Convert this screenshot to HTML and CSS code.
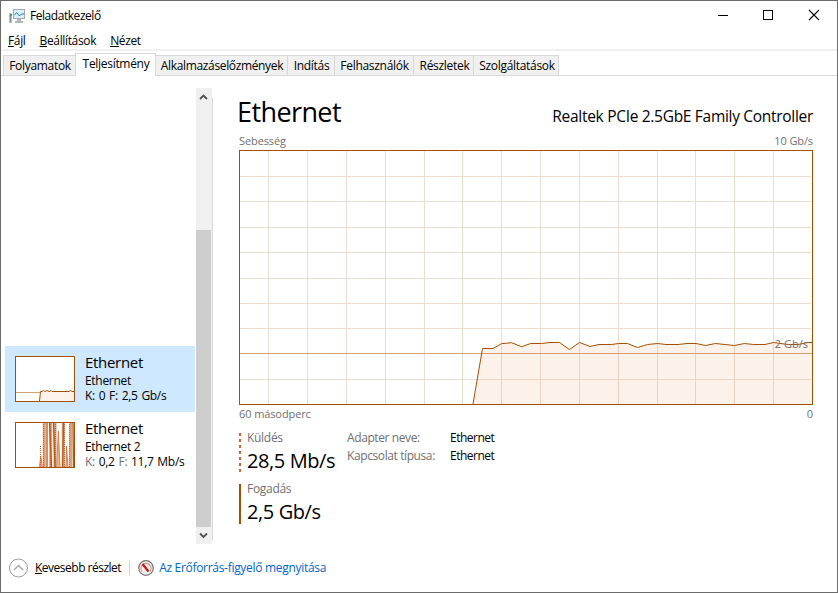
FILE: index.html
```
<!DOCTYPE html>
<html lang="hu">
<head>
    <meta charset="UTF-8">
    <title>Feladatkezelő</title>
    <link rel="stylesheet" href="styles.css">
</head>
<body>
    <div class="window">
        <header class="titlebar">
            <svg class="app-icon" width="17" height="16" viewBox="0 0 17 16">
                <rect x="0.5" y="5.5" width="2" height="9" fill="#8d9193" stroke="#b9bcbe"/>
                <rect x="1" y="6" width="2" height="2" fill="#3fae3a"/>
                <rect x="4.5" y="1.5" width="11" height="9" fill="#d9f0fb" stroke="#a5a9ac"/>
                <path d="M5.500 7L7.500 4.500L10.500 8L12.500 6L15 6" fill="none" stroke="#1b86c8"/>
                <path d="M8 11h4v2h2v2H6v-2h2z" fill="#b4b7b9"/>
            </svg>
            <span class="title">Feladatkezelő</span>
            <div class="controls">
                <svg width="46" height="30" viewBox="0 0 46 30"><path d="M18 14.5h10" stroke="#000"/></svg>
                <svg width="46" height="30" viewBox="0 0 46 30"><rect x="17.5" y="9.5" width="9" height="9" fill="none" stroke="#000"/></svg>
                <svg width="46" height="30" viewBox="0 0 46 30"><path d="M17 9l10 10M27 9l-10 10" stroke="#000" stroke-width="1.1"/></svg>
            </div>
        </header>

        <nav class="menu">
            <span><u>F</u>ájl</span>
            <span><u>B</u>eállítások</span>
            <span><u>N</u>ézet</span>
        </nav>

        <nav class="tabs">
            <div class="tab tab-processes">Folyamatok</div>
            <div class="tab active">Teljesítmény</div>
            <div class="tab tab-history">Alkalmazáselőzmények</div>
            <div class="tab tab-startup">Indítás</div>
            <div class="tab tab-users">Felhasználók</div>
            <div class="tab tab-details">Részletek</div>
            <div class="tab tab-services">Szolgáltatások</div>
        </nav>

        <main class="content">
            <aside class="sidebar">
                <div class="item selected">
                    <svg class="thumb" width="60" height="46" viewBox="0 0 60 46">
                        <rect x="0.5" y="0.5" width="59" height="45" fill="#fff"/>
                        <path d="M24 45L26 35.500H59V45Z" fill="#fcf3eb"/>
                        <path d="M1 36.5H25" stroke="#d3a078"/>
                        <path d="M24.500 45L25.500 35.500H27L28.500 34.500L30 35.500L32 34.500L34 35.500L36 34.500L37 35.500H54L55.500 34.500L57 35.500H59" fill="none" stroke="#a74f01"/>
                        <rect x="0.5" y="0.5" width="59" height="45" fill="none" stroke="#a74f01"/>
                    </svg>
                    <div class="info">
                        <div class="name">Ethernet</div>
                        <div class="sub">Ethernet</div>
                        <div class="rate">K: 0 F: 2,5 Gb/s</div>
                    </div>
                </div>
                <div class="item">
                    <svg class="thumb" width="60" height="46" viewBox="0 0 60 46">
                        <rect x="0.5" y="0.5" width="59" height="45" fill="#fff"/>
                        <path d="M24.500 45L25.700 34L27.500 45M41.500 45L43.400 9L45 45M51 45L51.500 24L53 45" fill="#e5b896" stroke="#c0703c" stroke-width="0.800"/>
                        <path d="M29.300 1V45M35.700 1V45M40 1V45M48.300 1V45M55.700 1V45" stroke="#dfa07c" stroke-width="3"/>
                        <path d="M32 1V45M34.500 1L36.500 45M38.500 1L40 45M48.500 1L47.500 45M58 1L58.500 45" stroke="#b05a14" stroke-width="1.300"/>
                        <path d="M25.500 45V24M28.500 45V1M35.500 45V1M40.500 45V1M49.500 45V1M54.500 45V1" stroke="#d4622a" stroke-dasharray="1 1"/>
                        <rect x="0.5" y="0.5" width="59" height="45" fill="none" stroke="#a74f01"/>
                    </svg>
                    <div class="info">
                        <div class="name">Ethernet</div>
                        <div class="sub">Ethernet 2</div>
                        <div class="rate"><i>K:</i> 0,2 <i>F:</i> 11,7 Mb/s</div>
                    </div>
                </div>
            </aside>

            <div class="scrollbar">
                <svg width="16" height="17" viewBox="0 0 16 17"><path d="M4 11L7.500 7.500L11 11" fill="none" stroke="#505050" stroke-width="1.8"/></svg>
                <div class="handle"></div>
                <svg width="16" height="17" viewBox="0 0 16 17"><path d="M4 6.500L7.500 10L11 6.500" fill="none" stroke="#505050" stroke-width="1.8"/></svg>
            </div>
            <div class="splitter"></div>

            <section class="detail">
                <div class="heading">
                    <h1>Ethernet</h1>
                    <span class="adapter">Realtek PCIe 2.5GbE Family Controller</span>
                </div>
                <div class="axis axis-top"><span>Sebesség</span><span>10 Gb/s</span></div>
                <div class="chart">
                    <svg width="574" height="255" viewBox="239 150 574 255">
                        <path d="M268.5 151V404M307.5 151V404M346.5 151V404M385.5 151V404M424.5 151V404M462.5 151V404M501.5 151V404M540.5 151V404M579.5 151V404M618.5 151V404M657.5 151V404M695.5 151V404M734.5 151V404M773.5 151V404M240 176.5H811M240 201.5H811M240 227.500H811M240 252.5H811M240 278.5H811M240 303.5H811M240 328.5H811M240 379.5H811" stroke="#eddccf"/>
                        <path d="M240 353.500H812" stroke="#d3a078"/>
                        <path class="area" d="M473 404L482.500 348.500H493L501.500 343.700L511.500 342.700L521.500 346.700L530.700 343.500H541.500L550 342.500H559.500L569.500 349.500L579.500 342.500L590 346.500L599 344.500H611.500L618.500 343.500H627.500L637.500 347.500L647.500 344.500L657.500 343.500L666 344.500H678L687 343.500H696L705.500 345.500L715.500 343.500L725 344.500L734.500 345.500L744.500 343.500L753.500 344.500H765L773.500 342.500L788 344.500H798L808 342.500H812V404Z"/>
                        <path class="line" d="M473 404L482.500 348.500H493L501.500 343.700L511.500 342.700L521.500 346.700L530.700 343.500H541.500L550 342.500H559.500L569.500 349.500L579.500 342.500L590 346.500L599 344.500H611.500L618.500 343.500H627.500L637.500 347.500L647.500 344.500L657.500 343.500L666 344.500H678L687 343.500H696L705.500 345.500L715.500 343.500L725 344.500L734.500 345.500L744.500 343.500L753.500 344.500H765L773.500 342.500L788 344.500H798L808 342.500H812"/>
                        <rect x="239.5" y="150.5" width="573" height="254" fill="none" stroke="#a74f01"/>
                    </svg>
                    <span class="limit">2 Gb/s</span>
                </div>
                <div class="axis axis-bottom"><span>60 másodperc</span><span>0</span></div>

                <div class="stats">
                    <div class="rates">
                        <div class="stat">
                            <svg width="2" height="40" viewBox="0 0 2 40"><path d="M1 0V40" stroke="#d4622a" stroke-width="2" stroke-dasharray="3 3"/></svg>
                            <div>
                                <div class="label">Küldés</div>
                                <div class="value">28,5 Mb/s</div>
                            </div>
                        </div>
                        <div class="stat">
                            <svg width="2" height="40" viewBox="0 0 2 40"><path d="M1 0V40" stroke="#a74f01" stroke-width="2"/></svg>
                            <div>
                                <div class="label">Fogadás</div>
                                <div class="value">2,5 Gb/s</div>
                            </div>
                        </div>
                    </div>
                    <dl class="props">
                        <dt>Adapter neve:</dt><dd>Ethernet</dd>
                        <dt>Kapcsolat típusa:</dt><dd>Ethernet</dd>
                    </dl>
                </div>
            </section>
        </main>

        <footer class="footer">
            <svg width="21" height="20" viewBox="0 0 21 20"><circle cx="10.500" cy="10" r="9" fill="none" stroke="#9a9a9a"/><path d="M6 12L10.500 7.500L15 12" fill="none" stroke="#a8a8a8" stroke-width="1.500"/></svg>
            <span class="less"><u>K</u>evesebb részlet</span>
            <span class="divider"></span>
            <svg width="16" height="16" viewBox="0 0 16 16">
                <circle cx="8" cy="8" r="7.300" fill="#f1efed" stroke="#77726f" stroke-width="1.200"/>
                <path d="M4 11.500A5 5 0 1 1 12 11.500" fill="none" stroke="#c9a58c" stroke-width="1.300"/>
                <path d="M4.500 4L10.500 11.500" stroke="#d01414" stroke-width="2.200"/>
            </svg>
            <span class="link">Az Erőforrás-figyelő megnyitása</span>
        </footer>
    </div>
</body>
</html>
```
FILE: styles.css
```
* {
    box-sizing: border-box;
}

body {
    margin: 0;
    font-family: "Open Sans", "Noto Sans", sans-serif;
    font-size: 12px;
    line-height: 16px;
    letter-spacing: -0.3px;
    color: #000;
    background-color: #fff;
    white-space: nowrap;
}

svg {
    display: block;
    flex: none;
}

.window {
    display: flex;
    flex-direction: column;
    width: 838px;
    height: 593px;
    border: 1px solid #6b6b6b;
    overflow: hidden;
}

.titlebar {
    display: flex;
    align-items: center;
    height: 30px;
    padding-left: 8px;
}

.title {
    margin-left: 4px;
    letter-spacing: -0.45px;
}

.controls {
    display: flex;
    margin: 0 -1px 0 auto;
}

.menu {
    display: flex;
    gap: 14px;
    height: 20px;
    padding: 2px 7px 0;
    letter-spacing: -0.35px;
    border-bottom: 2px solid #f0f0f0;
}

.tabs {
    display: flex;
    align-items: flex-end;
    height: 25px;
    padding-left: 2px;
    background: linear-gradient(#d9d9d9, #d9d9d9) bottom / 100% 1px no-repeat;
}

.tab {
    height: 21px;
    padding: 2px 0 0 1px;
    text-align: center;
    background-color: #f0f0f0;
    border: 1px solid #d9d9d9;
    border-left: none;
}

.tab.active {
    width: 81px;
    height: 23px;
    background-color: #fff;
    border-left: 1px solid #d9d9d9;
    border-bottom: none;
}

.tab-processes {
    width: 72px;
    border-left: 1px solid #d9d9d9;
    border-right: none;
}

.tab-history {
    width: 132px;
    letter-spacing: -0.35px;
}

.tab-startup {
    width: 47px;
}

.tab-users {
    width: 79px;
}

.tab-details {
    width: 60px;
    padding-left: 2px;
}

.tab-services {
    width: 85px;
    padding-left: 2px;
}

.content {
    display: flex;
    height: 468px;
    padding: 12px 24px 0 4px;
}

.sidebar {
    width: 191px;
    padding-top: 258px;
}

.item {
    display: flex;
    width: 190px;
    height: 66px;
    padding: 10px 0 0 10px;
}

.item.selected {
    background-color: #cde8ff;
}

.info {
    margin: -4px 0 0 10px;
}

.name {
    font-size: 15px;
    line-height: 21px;
    letter-spacing: -0.3px;
}

.sub {
    line-height: 15px;
}

.rate {
    line-height: 15px;
    word-spacing: 1px;
}

.rate i {
    font-style: normal;
    color: #707070;
}

.scrollbar {
    width: 16px;
    height: 456px;
    background-color: #f0f0f0;
}

.handle {
    width: 15px;
    height: 297px;
    margin-top: 125px;
    background-color: #cdcdcd;
}

.splitter {
    width: 1px;
    height: 442px;
    margin-top: 10px;
    background-color: #d9d9d9;
}

.detail {
    flex: 1;
    padding-left: 26px;
}

.heading {
    display: flex;
    justify-content: space-between;
    height: 45px;
}

h1 {
    margin: 6px 0 0 -2px;
    font-size: 27px;
    font-weight: 400;
    line-height: 36px;
    letter-spacing: -0.6px;
}

.adapter {
    margin-top: 17px;
    font-size: 15.5px;
    line-height: 22px;
}

.axis {
    display: flex;
    justify-content: space-between;
    font-size: 11px;
    letter-spacing: -0.1px;
    color: #707070;
}

.axis-top {
    height: 17px;
}

.axis-bottom {
    height: 28px;
    padding-top: 1px;
}

.chart {
    position: relative;
}

.area {
    fill: rgba(225, 135, 65, 0.11);
}

.line {
    fill: none;
    stroke: #a74f01;
}

.limit {
    position: absolute;
    right: 5px;
    top: 186px;
    font-size: 11px;
    letter-spacing: 0;
    color: #707070;
}

.stats {
    display: flex;
}

.rates {
    width: 108px;
}

.stat {
    display: flex;
    gap: 6px;
    height: 51px;
}

.label {
    margin-top: -3px;
    color: #707070;
}

.value {
    font-size: 20px;
    line-height: 30px;
    letter-spacing: -0.4px;
}

.props {
    display: grid;
    grid-template-columns: 103px auto;
    grid-auto-rows: 18px;
    align-content: start;
    margin: -3px 0 0;
    letter-spacing: -0.4px;
}

.props dt {
    color: #707070;
}

.props dd {
    margin: 0;
    letter-spacing: -0.5px;
}

.footer {
    display: flex;
    align-items: center;
    height: 48px;
    padding-left: 7px;
}

.less {
    margin-left: 6px;
    letter-spacing: -0.5px;
}

.divider {
    width: 1px;
    height: 14px;
    margin: 0 8px;
    background-color: #d0d0d0;
}

.link {
    margin-left: 5px;
    color: #0066cc;
}
```
